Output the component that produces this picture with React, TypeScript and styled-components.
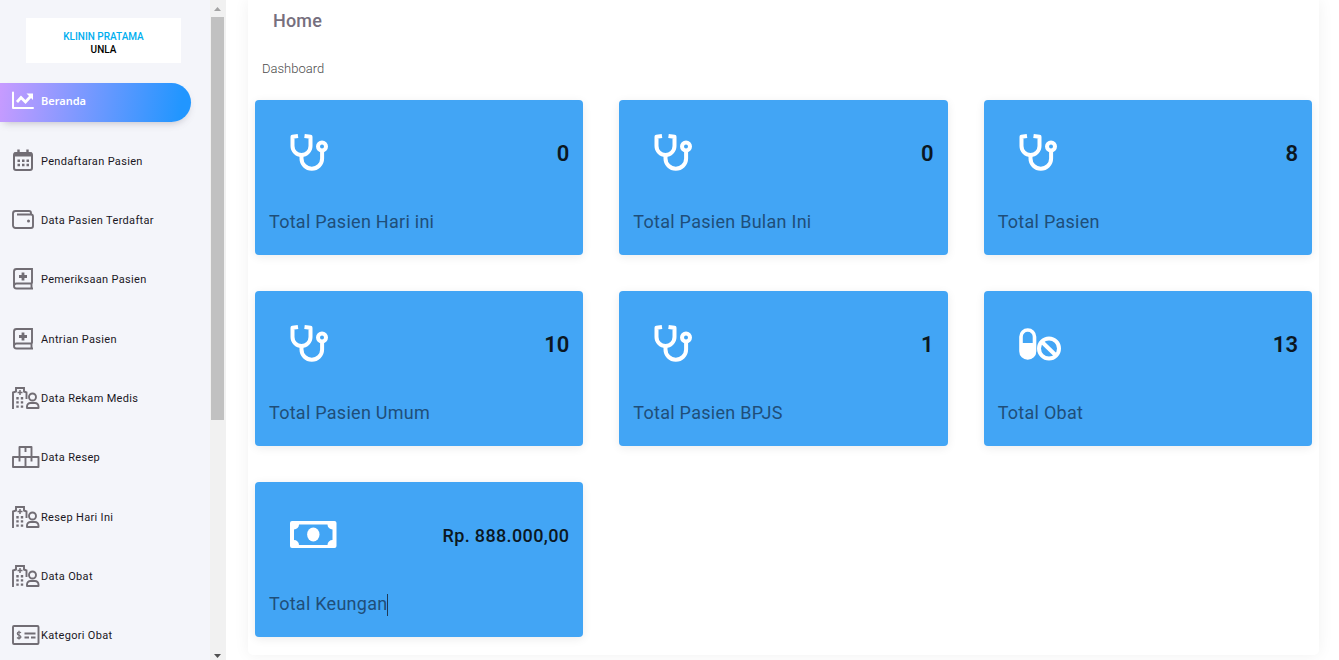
import React from "react";
import styled, { createGlobalStyle, css } from "styled-components";

const GlobalStyle = createGlobalStyle`
  *, *::before, *::after { box-sizing: border-box; }
  body {
    margin: 0;
    background: #fff;
    font-family: Roboto, "Liberation Sans", sans-serif;
  }
`;

const Page = styled.div`
  display: flex;
  height: 100vh;
  overflow: hidden;
`;

const Sidebar = styled.aside`
  flex: 0 0 226px;
  display: flex;
  background: #f4f5fa;
`;

const SidebarBody = styled.div`
  flex: 1;
  display: flex;
  flex-direction: column;
  padding: 18px 0 4px;
`;

const Brand = styled.a`
  display: flex;
  flex-direction: column;
  align-items: center;
  justify-content: center;
  height: 45px;
  margin: 0 29px 20px 26px;
  padding-top: 4px;
  background: #fff;
  color: #000;
  font: 500 10px/13px Roboto, sans-serif;
  text-decoration: none;
`;

const BrandTop = styled.span`
  color: #00aeef;
`;

const NavList = styled.ul`
  flex: 1;
  display: flex;
  flex-direction: column;
  justify-content: space-between;
  margin: 0;
  padding: 0 19px 0 0;
  list-style: none;
`;

const NavLink = styled.a<{ $active?: boolean }>`
  display: flex;
  align-items: center;
  height: 39px;
  padding-left: 10px;
  border-radius: 0 20px 20px 0;
  color: #1a171e;
  font-size: 11px;
  line-height: 16px;
  letter-spacing: 0.03em;
  text-decoration: none;
  svg {
    flex: none;
    height: 26px;
    color: #716d74;
  }
  ${(p) =>
    p.$active &&
    css`
      padding-bottom: 4px;
      background: linear-gradient(98deg, #c89bff, #2196ff 94%);
      box-shadow: 0 4px 8px -4px rgba(94, 86, 105, 0.42);
      color: #fff;
      font-weight: 600;
      font-family: "Noto Sans", sans-serif;
      letter-spacing: normal;
      svg {
        color: #fff;
      }
    `}
`;

const NavIcon = styled.span`
  display: flex;
  min-width: 31px;
  padding-bottom: 2px;
`;

const ScrollTrack = styled.div`
  flex: 0 0 16px;
  display: flex;
  flex-direction: column;
  align-items: center;
  justify-content: space-between;
  padding: 0 1px;
  background: #f1f1f1;
`;

const ScrollThumb = styled.div`
  flex: 0 0 61%;
  width: 13px;
  margin-right: 1px;
  background: #c1c1c1;
`;

const ScrollArrow = styled.svg`
  flex: none;
  width: 13px;
  height: 17px;
  margin-right: 1px;
`;

const Spacer = styled.div`
  flex: 1;
`;

const Main = styled.main`
  flex: 1;
  min-width: 0;
  padding: 0 20px 0 22px;
`;

const Sheet = styled.section`
  padding: 8px 7px 18px;
  border-radius: 0 0 5px 5px;
  background: #fff;
  box-shadow: 0 0 16px rgba(0, 0, 0, 0.06);
`;

const Title = styled.h1`
  margin: 0 18px;
  color: #766f7e;
  font-size: 18px;
  font-weight: 500;
  line-height: 26px;
  letter-spacing: 0.01em;
`;

const Subtitle = styled.p`
  margin: 25px 7px 21px;
  color: #4c4c4c;
  font-size: 13px;
  font-weight: 300;
  line-height: 20px;
`;

const CardGrid = styled.div`
  display: grid;
  grid-template-columns: repeat(3, minmax(0, 1fr));
  gap: 36px;
`;

const Card = styled.article`
  display: flex;
  flex-direction: column;
  height: 155px;
  padding: 34px 14px 20px;
  border-radius: 4px;
  background: #42a5f5;
  box-shadow: 0 2px 10px rgba(0, 0, 0, 0.08);
`;

const CardTop = styled.div`
  display: flex;
  align-items: center;
  justify-content: space-between;
  height: 38px;
  padding-left: 21px;
  color: #fff;
`;

const CardValue = styled.strong<{ $small?: boolean }>`
  color: #0b1722;
  font-size: ${(p) => (p.$small ? 18 : 22)}px;
  font-weight: ${(p) => (p.$small ? 500 : 600)};
  letter-spacing: ${(p) => (p.$small ? "0.02em" : "normal")};
`;

const CardLabel = styled.h2`
  margin: auto 0 0;
  color: #1f4e79;
  font-size: 18px;
  font-weight: 400;
  line-height: 26px;
  letter-spacing: 0.015em;
`;

const Caret = styled.span`
  display: inline-block;
  width: 1px;
  height: 22px;
  background: #1f3a55;
  vertical-align: middle;
`;

const Stroke = { fill: "none", stroke: "currentColor", strokeWidth: 2 } as const;

const ChartIcon = () => (
  <svg width="26" viewBox="0 0 26 26" {...Stroke}>
    <path d="M3 5.500v15.500h20" strokeLinejoin="round" strokeLinecap="round" />
    <path d="M7 15l4-4.500 4.500 4.500 5-5.500" strokeWidth="2.800" />
    <path d="M16.500 6.500h6.500v6.500z" fill="currentColor" stroke="none" />
  </svg>
);

const CalendarIcon = () => (
  <svg width="26" viewBox="0 0 26 26" {...Stroke}>
    <rect x="4" y="5" width="18" height="17" rx="2" />
    <path d="M4 6.500h18" strokeWidth="4" />
    <path d="M8.500 1.500v4M17.500 1.500v4" strokeWidth="2.400" />
    <path d="M7.500 12.800h11.500M7.500 17h11.500" strokeWidth="2.500" strokeDasharray="2.500 2" />
  </svg>
);

const WalletIcon = () => (
  <svg width="26" viewBox="0 0 26 26" {...Stroke} strokeWidth="1.900">
    <path d="M21 7V6a2 2 0 0 0-2-2H5.500A2.500 2.500 0 0 0 3 6.500V18.500a2.500 2.500 0 0 0 2.500 2.500H21a2 2 0 0 0 2-2V9.500a2 2 0 0 0-2-2H7" />
    <circle cx="18.500" cy="14" r="1.500" fill="currentColor" stroke="none" />
  </svg>
);

const BookIcon = () => (
  <svg width="26" viewBox="0 0 26 26" {...Stroke} strokeWidth="1.900">
    <path d="M22 17.500V3H6.500A2.500 2.500 0 0 0 4 5.500V20a2.500 2.500 0 0 0 2.500 2.500H23M22 17.500H6.500A2.500 2.500 0 0 0 4 20M21.500 17.500v5" />
    <path d="M13 6.500v8M9 10.500h8" strokeWidth="2.800" />
  </svg>
);

const HospitalIcon = () => (
  <svg width="31" viewBox="0 0 31 26" {...Stroke} strokeWidth="1.900">
    <path d="M3 24V7.500l3-1V3h8v3.500l2.500 1V14" />
    <path d="M10 5v5M7.500 7.500h5" strokeWidth="1.500" />
    <path d="M7.500 12v11.500M12 12v11.500" strokeWidth="2.400" strokeDasharray="2.400 1.800" />
    <circle cx="22.500" cy="12" r="3.500" />
    <path d="M17 23v-1.500a3.500 3.500 0 0 1 3.500-3.500h4.500a3.500 3.500 0 0 1 3.500 3.500V23z" strokeLinejoin="round" />
  </svg>
);

const BoxesIcon = () => (
  <svg width="31" viewBox="0 0 31 26" {...Stroke} strokeWidth="1.900" strokeLinejoin="round">
    <path d="M9.500 13V3h12v10M3 13h25.500v10H3zM15.500 13v10" />
    <path d="M15.500 3v5M9.500 13v4.500M21.500 13v4.500" />
  </svg>
);

const CheckIcon = () => (
  <svg width="31" viewBox="0 0 31 26" {...Stroke} strokeWidth="1.900">
    <rect x="3" y="4" width="25.500" height="18" rx="1" />
    <path d="M11 10.800q-.8-.8-2-.8-1.700 0-1.700 1.500T9 13.300t1.900 1.500T9 16.300q-1.300 0-2-.8M9 8.800v8.800" strokeWidth="1.200" />
    <path d="M14.500 11.500h11M14.500 15.500h4.500M21 15.500h4.500" />
  </svg>
);

const StethoscopeIcon = () => (
  <svg width="38" height="38" viewBox="0 0 38 38" fill="none" stroke="#fff" strokeWidth="4">
    <path d="M8 2L2.500 2.800V12a9 9 0 0 0 18 0V2.800L14.500 2" strokeLinejoin="round" />
    <path d="M11.500 21v3.500a10.300 10.300 0 0 0 20.600 0V16" />
    <circle cx="32" cy="12.500" r="4" />
  </svg>
);

const PillsIcon = () => (
  <svg width="42" height="38" viewBox="0 0 42 38" fill="none" stroke="#fff">
    <rect x="2" y="5" width="13.500" height="28" rx="6.700" strokeWidth="3.600" />
    <path d="M1 18h16V26a8 8 0 0 1-16 0z" fill="#fff" stroke="none" />
    <circle cx="30" cy="23.500" r="10" strokeWidth="4" />
    <path d="M22.500 16.500l15 14.500" strokeWidth="4" />
  </svg>
);

const MoneyIcon = () => (
  <svg width="47" height="38" viewBox="0 0 47 38" fill="#fff">
    <path
      fillRule="evenodd"
      d="M2 5h42.500a2 2 0 0 1 2 2v23a2 2 0 0 1-2 2H2a2 2 0 0 1-2-2V7a2 2 0 0 1 2-2zM9 8.500a5 5 0 0 1-5 5v10.500a5 5 0 0 1 5 5h28.500a5 5 0 0 1 5-5V13.500a5 5 0 0 1-5-5z"
    />
    <ellipse cx="23.300" cy="18.500" rx="6.200" ry="7" />
  </svg>
);

const navItems = [
  { label: "Beranda", icon: <ChartIcon />, active: true },
  { label: "Pendaftaran Pasien", icon: <CalendarIcon /> },
  { label: "Data Pasien Terdaftar", icon: <WalletIcon /> },
  { label: "Pemeriksaan Pasien", icon: <BookIcon /> },
  { label: "Antrian Pasien", icon: <BookIcon /> },
  { label: "Data Rekam Medis", icon: <HospitalIcon /> },
  { label: "Data Resep", icon: <BoxesIcon /> },
  { label: "Resep Hari Ini", icon: <HospitalIcon /> },
  { label: "Data Obat", icon: <HospitalIcon /> },
  { label: "Kategori Obat", icon: <CheckIcon /> },
];

const cards = [
  { label: "Total Pasien Hari ini", value: "0", icon: <StethoscopeIcon /> },
  { label: "Total Pasien Bulan Ini", value: "0", icon: <StethoscopeIcon /> },
  { label: "Total Pasien", value: "8", icon: <StethoscopeIcon /> },
  { label: "Total Pasien Umum", value: "10", icon: <StethoscopeIcon /> },
  { label: "Total Pasien BPJS", value: "1", icon: <StethoscopeIcon /> },
  { label: "Total Obat", value: "13", icon: <PillsIcon /> },
  { label: "Total Keungan", value: "Rp. 888.000,00", icon: <MoneyIcon />, small: true, caret: true },
];

export default function App() {
  return (
    <Page>
      <GlobalStyle />
      <Sidebar>
        <SidebarBody>
          <Brand href="#">
            <BrandTop>KLININ PRATAMA</BrandTop>
            <span>UNLA</span>
          </Brand>
          <NavList>
            {navItems.map((item) => (
              <li key={item.label}>
                <NavLink href="#" $active={item.active}>
                  <NavIcon>{item.icon}</NavIcon>
                  {item.label}
                </NavLink>
              </li>
            ))}
          </NavList>
        </SidebarBody>
        <ScrollTrack aria-hidden="true">
          <ScrollArrow viewBox="0 0 13 17" fill="#a3a3a3">
            <path d="M3 11h7L6.500 7z" />
          </ScrollArrow>
          <ScrollThumb />
          <Spacer />
          <ScrollArrow viewBox="0 0 13 17" fill="#505050">
            <path d="M3 11h7l-3.500 4z" />
          </ScrollArrow>
        </ScrollTrack>
      </Sidebar>
      <Main>
        <Sheet>
          <Title>Home</Title>
          <Subtitle>Dashboard</Subtitle>
          <CardGrid>
            {cards.map((card) => (
              <Card key={card.label}>
                <CardTop>
                  {card.icon}
                  <CardValue $small={card.small}>{card.value}</CardValue>
                </CardTop>
                <CardLabel>
                  {card.label}
                  {card.caret && <Caret />}
                </CardLabel>
              </Card>
            ))}
          </CardGrid>
        </Sheet>
      </Main>
    </Page>
  );
}
